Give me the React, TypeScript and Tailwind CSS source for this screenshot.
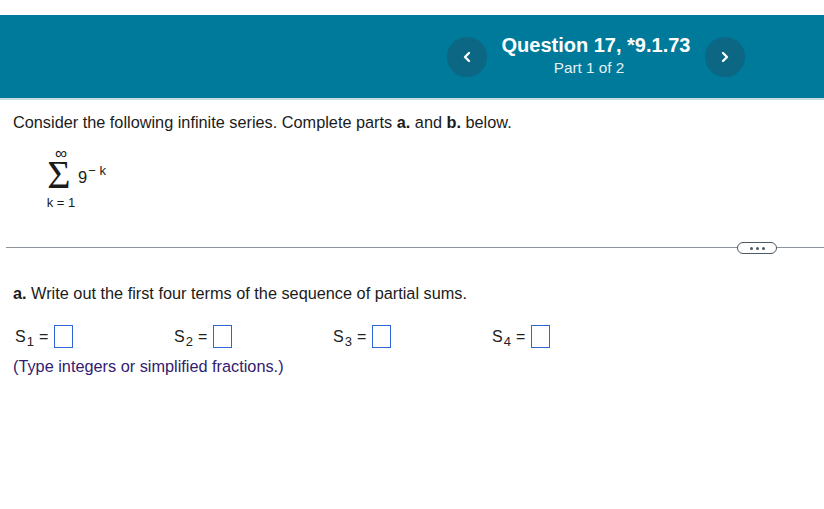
import { ChevronLeft, ChevronRight } from 'lucide-react';

function NavButton({ dir }: { dir: 'left' | 'right' }) {
  return (
    <button className="w-10 h-10 rounded-full bg-[#0b6784] flex items-center justify-center text-white">
      {dir === 'left' ? <ChevronLeft size={16} strokeWidth={3.5} /> : <ChevronRight size={16} strokeWidth={3.5} />}
    </button>
  );
}

function Blank({ n }: { n: number }) {
  return (
    <div className="w-[159px] flex items-center text-[16px] text-[#222]">
      <span>S</span>
      <span className="text-[13px] relative top-[5px] ml-[1px]">{n}</span>
      <span className="ml-[5px] mr-[6px]">=</span>
      <span className="inline-block w-[19px] h-[23px] border border-[#2f67d2]" />
    </div>
  );
}

export default function App() {
  return (
    <div className="w-[824px] h-[509px] bg-white pt-[15px] [font-family:'Liberation_Sans',Arial,sans-serif] text-[#1b1b1b]">
      <header className="h-[85px] bg-[#007a9a] border-b-2 border-[#c8dbe2] flex items-center pl-[447px]">
        <NavButton dir="left" />
        <div className="w-[218px] text-center text-white leading-none">
          <div className="text-[20px] font-bold -mt-[2px]">Question 17, *9.1.73</div>
          <div className="text-[15.3px] mt-[5px] pr-[14px] text-[#e3f0f4]">Part 1 of 2</div>
        </div>
        <NavButton dir="right" />
      </header>

      <p className="text-[16.3px] pl-[13px] mt-[10px]">
        Consider the following infinite series. Complete parts <b>a.</b> and <b>b.</b> below.
      </p>

      {/* series: sum k=1..inf of 9^-k */}
      <div className="flex items-start pl-[44px] mt-[13px]">
        <div className="flex flex-col items-center w-[34px]">
          <div className="text-[17px] leading-[14px]">∞</div>
          <div className="[font-family:'Liberation_Serif',serif] text-[40px] leading-[28px] -ml-[4px]">Σ</div>
          <div className="text-[13px] leading-[14px] mt-[7px]">k = 1</div>
        </div>
        <div className="mt-[21px] flex items-start">
          <span className="text-[16.5px] leading-[18px]">9</span>
          <span className="text-[13px] leading-[14px] -mt-[4px] ml-[1px]">− k</span>
        </div>
      </div>

      <div className="mt-[37px] ml-[6px] relative border-t border-[#8c939a]">
        <div className="absolute right-[47px] -top-[6px] w-[40px] h-[12px] rounded-full border border-[#4c5863] bg-white flex items-center justify-center gap-[3px]">
          <span className="w-[3px] h-[3px] rounded-full bg-[#4c5863]" />
          <span className="w-[3px] h-[3px] rounded-full bg-[#4c5863]" />
          <span className="w-[3px] h-[3px] rounded-full bg-[#4c5863]" />
        </div>
      </div>

      <p className="text-[16.3px] pl-[13px] mt-[33px]">
        <b>a.</b> Write out the first four terms of the sequence of partial sums.
      </p>

      <div className="flex pl-[15px] mt-[19px]">
        <Blank n={1} />
        <Blank n={2} />
        <Blank n={3} />
        <Blank n={4} />
      </div>
      <p className="text-[16.3px] pl-[13px] mt-[5px] text-[#32206f]">(Type integers or simplified fractions.)</p>
    </div>
  );
}
